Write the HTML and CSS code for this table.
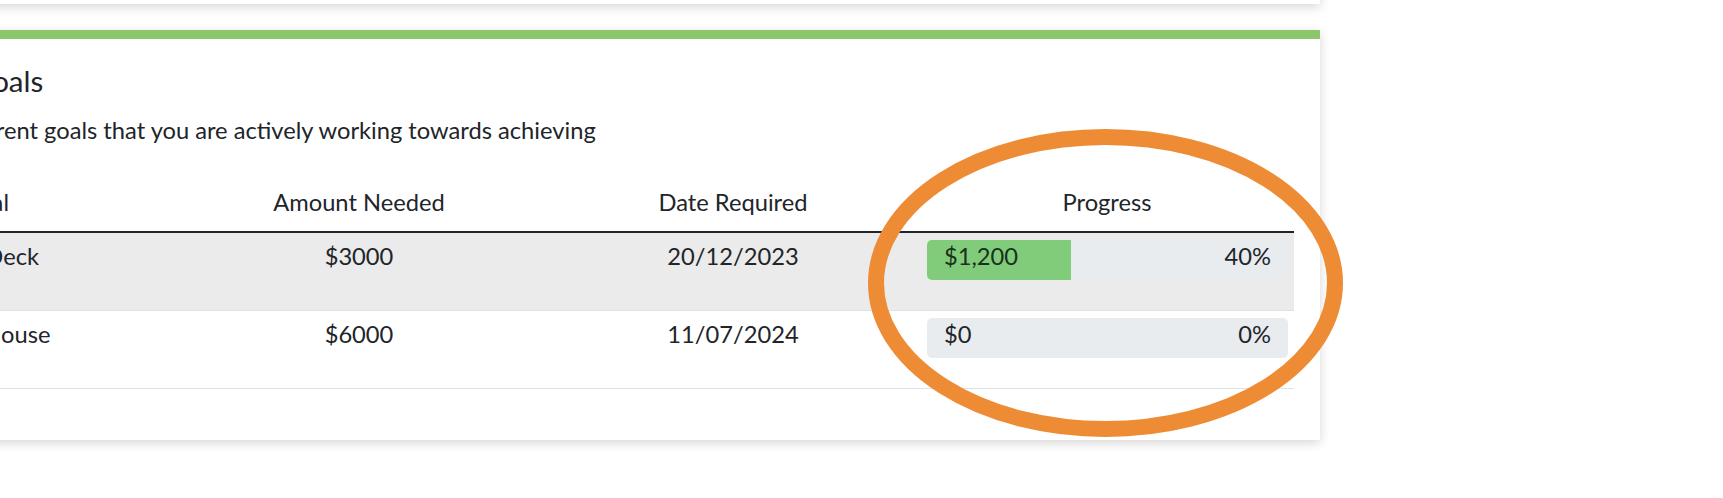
FILE: index.html
```html
<!DOCTYPE html>
<html lang="en">
<head>
<meta charset="utf-8">
<title>Current Goals</title>
<link rel="stylesheet" href="styles.css">
</head>
<body>
<div class="page">
  <div class="card card-top"></div>
  <section class="card card-goals">
    <h2 class="goals-title">Your Current Goals</h2>
    <p class="goals-sub">Here are all the current goals that you are actively working towards achieving</p>
    <div class="goals-table">
      <div class="trow thead">
        <div class="cell">Goal</div>
        <div class="cell">Amount Needed</div>
        <div class="cell">Date Required</div>
        <div class="cell">Progress</div>
      </div>
      <div class="trow tbody striped">
        <div class="cell">New Deck</div>
        <div class="cell">$3000</div>
        <div class="cell">20/12/2023</div>
        <div class="cell cell-progress">
          <div class="progress" style="background: linear-gradient(to right, #80cc7a 0, #80cc7a 40%, #e9ecef 40%, #e9ecef 100%);">
            <span class="progress-amount filled">$1,200</span>
            <span class="progress-pct">40%</span>
          </div>
        </div>
      </div>
      <div class="trow tbody">
        <div class="cell">Buy a House</div>
        <div class="cell">$6000</div>
        <div class="cell">11/07/2024</div>
        <div class="cell cell-progress">
          <div class="progress" style="background: linear-gradient(to right, #80cc7a 0, #80cc7a 0%, #e9ecef 0%, #e9ecef 100%);">
            <span class="progress-amount">$0</span>
            <span class="progress-pct">0%</span>
          </div>
        </div>
      </div>
    </div>
  </section>
</div>
<svg class="annotation" width="500" height="330" viewBox="0 0 500 330" aria-hidden="true">
  <ellipse cx="245.5" cy="163" rx="229.5" ry="146" fill="none" stroke="#ee8b35" stroke-width="16"/>
</svg>
</body>
</html>
```
FILE: styles.css
```css
html, body {
  margin: 0;
  padding: 0;
  background: #ffffff;
  overflow: hidden;
}

body {
  width: 1723px;
  height: 498px;
  font-family: Lato, "Open Sans", "Liberation Sans", sans-serif;
  font-size: 23.7px;
  line-height: 33px;
  color: #212529;
}

.page {
  width: 1548px;
  margin-left: -228px;
}

.card {
  background: #ffffff;
  box-shadow: 0 3px 10px rgba(0, 0, 0, 0.16);
}

.card-top {
  height: 40px;
  margin-top: -36px;
}

.card-goals {
  margin-top: 26px;
  border-top: 9px solid #8cc66c;
  padding: 25px 26px 51px;
}

.goals-title {
  margin: 0;
  font-size: 29.5px;
  line-height: 33px;
  font-weight: 400;
}

.goals-sub {
  margin: 17px 0 0;
}

.goals-table {
  margin-top: 31px;
}

.trow {
  display: grid;
  grid-template-columns: repeat(4, 1fr);
}

.thead {
  border-bottom: 2px solid #212529;
}

.thead .cell {
  padding: 8px 7px 12px;
}

.tbody {
  height: 78px;
  box-sizing: border-box;
  border-bottom: 1px solid #dee2e6;
}

.striped {
  background: #ebebeb;
}

.cell {
  text-align: center;
  padding: 7px 7px 0;
  white-space: nowrap;
}

.cell-progress {
  padding: 7px 6px 0 7px;
}

.progress {
  height: 40px;
  border-radius: 5px;
  display: flex;
  justify-content: space-between;
  align-items: flex-start;
  padding: 0 17px;
  line-height: 33px;
}

.progress-amount.filled {
  color: #1b301d;
}

.annotation {
  position: absolute;
  left: 860px;
  top: 120px;
}
```
